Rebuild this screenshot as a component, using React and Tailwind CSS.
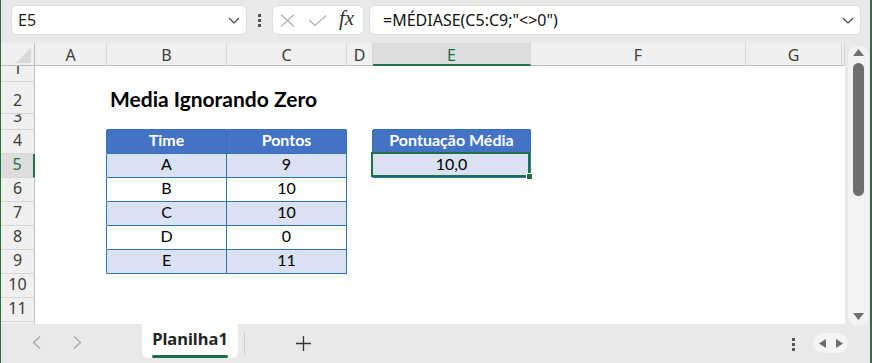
import React from "react";

const UI = "font-['Noto_Sans',sans-serif]";
const CELLF = "font-['Lato',sans-serif]";

const COLS = ["A", "B", "C", "D", "E", "F", "G", ""];
const ROWS = [1, 2, 3, 4, 5, 6, 7, 8, 9, 10, 11, 12];

const DATA = {
  B2: { t: "Media Ignorando Zero", k: "title" },
  B4: { t: "Time", k: "head" },
  C4: { t: "Pontos", k: "head" },
  E4: { t: "Pontuação Média", k: "head" },
  B5: { t: "A", k: "band" },
  C5: { t: "9", k: "band" },
  B6: { t: "B", k: "plain" },
  C6: { t: "10", k: "plain" },
  B7: { t: "C", k: "band" },
  C7: { t: "10", k: "band" },
  B8: { t: "D", k: "plain" },
  C8: { t: "0", k: "plain" },
  B9: { t: "E", k: "band" },
  C9: { t: "11", k: "band" },
  E5: { t: "10,0", k: "band" },
};

function get(r, ci) {
  const c = COLS[ci];
  if (!c) return null;
  return DATA[c + r] || null;
}
function inTable(r, ci) {
  const d = get(r, ci);
  return !!d && d.k !== "title";
}

function Chevron({ className }) {
  return (
    <svg className={className} width="12" height="7" viewBox="0 0 12 7" fill="none">
      <path d="M1 1 L6 6 L11 1" stroke="#444" strokeWidth="1.2" />
    </svg>
  );
}

function VDots({ className }) {
  return (
    <div className={"flex flex-col gap-[2px] " + className}>
      <div className="w-[3px] h-[3px] bg-[#555]" />
      <div className="w-[3px] h-[3px] bg-[#555]" />
      <div className="w-[3px] h-[3px] bg-[#555]" />
    </div>
  );
}

function Cell({ r, ci }) {
  const d = get(r, ci);
  const rb = inTable(r, ci) || inTable(r, ci + 1);
  const bb = inTable(r, ci) || inTable(r + 1, ci);
  const rbc = rb ? "border-r-[#2e75b6]" : "border-r-transparent";
  const bbc = bb ? "border-b-[#2e75b6]" : "border-b-transparent";
  let bg = "";
  let inner = null;
  let align = "justify-center";
  if (d) {
    if (d.k === "head") {
      bg = "bg-[#4472c4]";
      inner = <span className="text-[16px] leading-none font-bold text-white">{d.t}</span>;
    } else if (d.k === "band") {
      bg = "bg-[#d9e1f2]";
      inner = <span className="text-[16px] leading-none text-black">{d.t}</span>;
    } else if (d.k === "plain") {
      inner = <span className="text-[16px] leading-none text-black">{d.t}</span>;
    } else if (d.k === "title") {
      align = "justify-start pl-[3px]";
      inner = (
        <span className="text-[21px] leading-none font-bold text-black whitespace-nowrap">{d.t}</span>
      );
    }
  }
  const isSel = COLS[ci] === "E" && r === 5;
  const pb = d && d.k === "title" ? "pb-[4px]" : "pb-[5px]";
  return (
    <div
      className={`${CELLF} flex items-end ${align} ${pb} border-r border-b ${rbc} ${bbc} ${bg} ${
        isSel ? "relative" : ""
      }`}
    >
      {inner}
      {isSel && (
        <>
          <div className="absolute -left-[2px] -top-[2px] right-0 bottom-0 border-2 border-[#1f7145] z-10" />
          <div className="absolute -right-[3px] -bottom-[3px] w-[7px] h-[7px] bg-[#1f7145] border border-white z-20" />
        </>
      )}
    </div>
  );
}

export default function App() {
  const cells = [];
  cells.push(
    <div
      key="corner"
      className="relative bg-[#f0f0f0] border-r border-b border-r-[#bfbfbf] border-b-[#bfbfbf]"
    >
      <svg className="absolute left-[15px] top-[5px]" width="15" height="15" viewBox="0 0 15 15">
        <polygon points="15,0 15,15 0,15" fill="#d9d9d9" />
      </svg>
    </div>
  );
  COLS.forEach((c, i) => {
    const sel = c === "E";
    cells.push(
      <div
        key={"h" + i}
        className={
          sel
            ? `${UI} flex items-end justify-center pb-[1px] bg-[#dddddd] border-r border-r-[#d4d4d4] border-b-2 border-b-[#217346] text-[#1e6e42] text-[16px] leading-none`
            : `${UI} flex items-end justify-center pb-[2px] bg-[#f0f0f0] border-r border-r-[#d6d6d6] border-b border-b-[#bfbfbf] text-[#3c3c3c] text-[16px] leading-none`
        }
      >
        {c}
      </div>
    );
  });
  ROWS.forEach((r) => {
    const sel = r === 5;
    cells.push(
      <div
        key={"r" + r}
        className={
          sel
            ? `${UI} overflow-hidden flex items-end justify-center pb-[5px] bg-[#dddddd] border-r-2 border-r-[#217346] border-b border-b-[#d6d6d6] text-[#1e6e42] text-[16px] leading-none`
            : `${UI} overflow-hidden flex items-end justify-center pb-[5px] bg-[#f0f0f0] border-r border-r-[#bfbfbf] border-b border-b-[#d6d6d6] text-[#3c3c3c] text-[16px] leading-none`
        }
      >
        {r < 12 ? r : ""}
      </div>
    );
    COLS.forEach((c, ci) => {
      cells.push(<Cell key={c + r + "-" + ci} r={r} ci={ci} />);
    });
  });

  return (
    <div className={`${UI} w-[872px] h-[363px] overflow-hidden bg-[#eae8ea] border-l border-r-2 border-[#217346] flex flex-col`}>
      {/* Formula bar */}
      <div className="h-[43px] shrink-0 flex items-start pt-[6px] pl-[11px]">
        <div className="w-[234px] h-[28px] bg-white rounded-[5px] shadow-[0_0_0_1px_#e2dfe2] flex items-center justify-between pl-[6px] pr-[6px]">
          <span className="text-[16px] text-[#1f1f1f] leading-none">E5</span>
          <Chevron />
        </div>
        <div className="w-[27px] h-[28px] flex items-center justify-center">
          <VDots className="mt-[1px]" />
        </div>
        <div className="w-[90px] h-[28px] bg-white rounded-[5px] shadow-[0_0_0_1px_#e2dfe2] flex items-center">
          <svg className="ml-[7px]" width="15" height="13" viewBox="0 0 15 13" fill="none">
            <path d="M1 0.5 L14 12.5 M14 0.5 L1 12.5" stroke="#b3b3b3" strokeWidth="1.3" />
          </svg>
          <svg className="ml-[13px]" width="19" height="11" viewBox="0 0 19 11" fill="none">
            <path d="M1 5 L7 10.5 L18 0.5" stroke="#b3b3b3" strokeWidth="1.3" />
          </svg>
          <span className="ml-[12px] font-['Liberation_Serif',serif] italic text-[21px] leading-none text-[#333] -mt-[3px]">
            fx
          </span>
        </div>
        <div className="ml-[7px] w-[490px] h-[28px] bg-white rounded-[5px] shadow-[0_0_0_1px_#e2dfe2] flex items-center justify-between pl-[13px] pr-[6px]">
          <span className="text-[16px] text-[#111] leading-none">=MÉDIASE(C5:C9;"&lt;&gt;0")</span>
          <Chevron />
        </div>
      </div>

      {/* Main grid area */}
      <div className="h-[281px] shrink-0 flex">
        <div className="w-[844px] h-[281px] bg-white overflow-hidden grid grid-cols-[34px_72px_120px_120px_26px_158px_215px_96px_3px] grid-rows-[23px_16px_32px_16px_24px_24px_24px_24px_24px_24px_24px_24px_2px]">
          {cells}
        </div>
        <div className="ml-[3px] w-[21px] pt-[3px]">
          <div className="w-[21px] h-[280px] bg-[#f3f3f3] rounded-[10px] flex flex-col items-center pt-[3px]">
            <svg width="11" height="7" viewBox="0 0 11 7">
              <polygon points="5.5,0 11,7 0,7" fill="#707070" />
            </svg>
            <div className="mt-[7px] w-[11px] h-[133px] rounded-full bg-[#6e6e6e]" />
            <div className="flex-1" />
            <svg className="mb-[6px]" width="11" height="7" viewBox="0 0 11 7">
              <polygon points="0,0 11,0 5.5,7" fill="#707070" />
            </svg>
          </div>
        </div>
      </div>

      {/* Bottom sheet bar */}
      <div className="h-[39px] shrink-0 flex items-start">
        <div className="w-[141px] h-[39px] flex items-center pb-[2px]">
          <svg className="ml-[31px]" width="9" height="13" viewBox="0 0 9 13" fill="none">
            <path d="M8 0.5 L1.5 6.5 L8 12.5" stroke="#a8a8a8" strokeWidth="1.3" />
          </svg>
          <svg className="ml-[32px]" width="9" height="13" viewBox="0 0 9 13" fill="none">
            <path d="M1 0.5 L7.5 6.5 L1 12.5" stroke="#a8a8a8" strokeWidth="1.3" />
          </svg>
        </div>
        <div className="w-[96px] h-[34px] bg-white rounded-b-[6px] flex flex-col items-center pt-[7px]">
          <span className="text-[16.5px] leading-none font-bold text-[#242424]">Planilha1</span>
          <div className="mt-[7px] w-[76px] h-[3px] rounded-full bg-[#1d7044]" />
        </div>
        <div className="ml-[6px] mt-[8px] w-[1px] h-[23px] bg-[#cdcacd]" />
        <svg className="ml-[51px] mt-[12px]" width="15" height="15" viewBox="0 0 15 15" fill="none">
          <path d="M7.5 0 V15 M0 7.5 H15" stroke="#333" strokeWidth="1.3" />
        </svg>
        <div className="flex-1" />
        <VDots className="mt-[14px]" />
        <div className="ml-[18px] mr-[22px] mt-[9px] w-[35px] h-[20px] rounded-full bg-[#f5f3f5] flex items-center justify-center gap-[10px]">
          <svg width="7" height="9" viewBox="0 0 7 9">
            <polygon points="7,0 7,9 0,4.5" fill="#6e6e6e" />
          </svg>
          <svg width="7" height="9" viewBox="0 0 7 9">
            <polygon points="0,0 7,4.5 0,9" fill="#6e6e6e" />
          </svg>
        </div>
      </div>
    </div>
  );
}
